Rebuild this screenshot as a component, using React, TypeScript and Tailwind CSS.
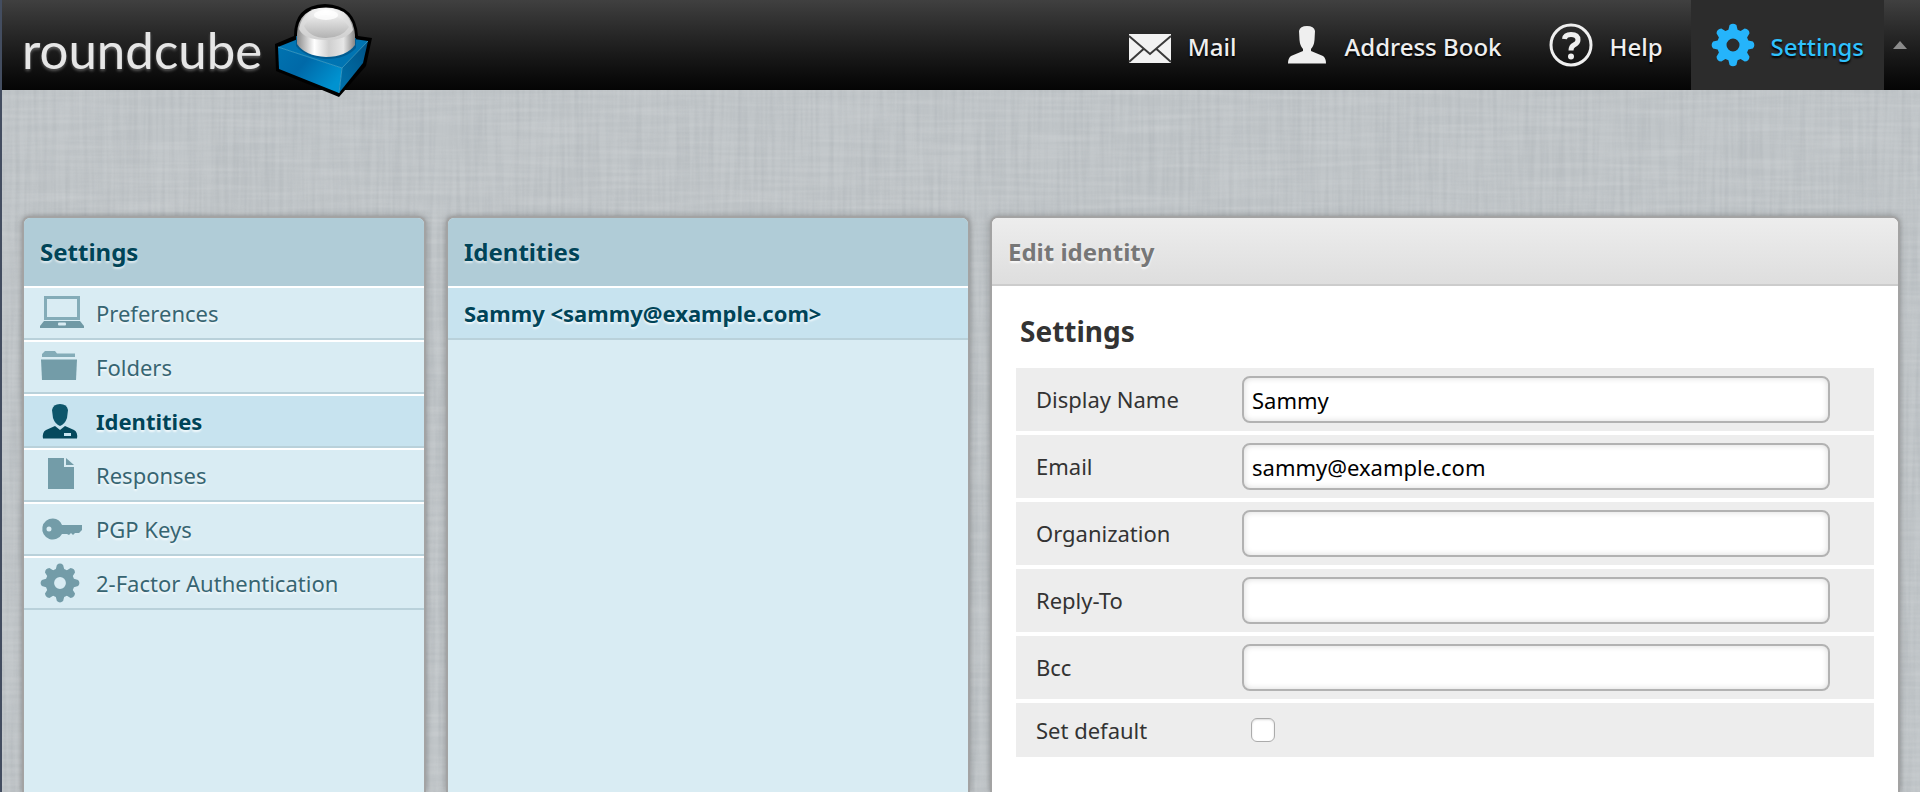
import React, { useState } from "react";

const FONT = "font-['Noto_Sans','Open_Sans',sans-serif]";

function gearPath(cx: number, cy: number, tip: number, base: number, hole: number): string {
  const parts: string[] = [];
  for (let i = 0; i < 8; i++) {
    const mid = (i * Math.PI) / 4 - Math.PI / 2;
    const pt = (r: number, a: number) =>
      `${(cx + r * Math.cos(mid + a)).toFixed(2)} ${(cy + r * Math.sin(mid + a)).toFixed(2)}`;
    const h = tip * 0.94;
    parts.push(
      `${i === 0 ? "M" : "L"}${pt(base, -0.29)}L${pt(h, -0.17)}Q${pt(tip * 1.06, 0)} ${pt(h, 0.17)}L${pt(base, 0.29)}`,
    );
  }
  return `${parts.join("")}Z M${cx - hole} ${cy}a${hole} ${hole} 0 1 0 ${hole * 2} 0a${hole} ${hole} 0 1 0 ${-hole * 2} 0Z`;
}

function Linen() {
  return (
    <svg className="absolute inset-0 h-full w-full" aria-hidden="true">
      <filter id="warp" x="0" y="0" width="100%" height="100%" colorInterpolationFilters="sRGB">
        <feTurbulence type="fractalNoise" baseFrequency="0.22 0.01" numOctaves="2" seed="4" />
        <feColorMatrix values="0 0 0 0 0.42  0 0 0 0 0.45  0 0 0 0 0.48  2 0 0 0 -0.7" />
      </filter>
      <filter id="weft" x="0" y="0" width="100%" height="100%" colorInterpolationFilters="sRGB">
        <feTurbulence type="fractalNoise" baseFrequency="0.01 0.22" numOctaves="2" seed="9" />
        <feColorMatrix values="0 0 0 0 1  0 0 0 0 1  0 0 0 0 1  2 0 0 0 -0.7" />
      </filter>
      <rect width="100%" height="100%" filter="url(#warp)" opacity="0.1" />
      <rect width="100%" height="100%" filter="url(#weft)" opacity="0.11" />
    </svg>
  );
}

function CubeLogo() {
  return (
    <svg className="mt-0.5 h-24 w-[100px]" viewBox="0 0 100 96" aria-hidden="true">
      <defs>
        <linearGradient id="left" x1="0" y1="0" x2="1" y2="0.6">
          <stop offset="0" stopColor="#0073b0" />
          <stop offset="0.45" stopColor="#0069a8" />
          <stop offset="1" stopColor="#0092d0" />
        </linearGradient>
        <linearGradient id="right" x1="0" y1="1" x2="1" y2="0">
          <stop offset="0" stopColor="#0073ad" />
          <stop offset="1" stopColor="#005286" />
        </linearGradient>
        <linearGradient id="ball" x1="0" y1="0" x2="1" y2="0">
          <stop offset="0" stopColor="#8c8c8c" />
          <stop offset="0.3" stopColor="#ffffff" />
          <stop offset="0.55" stopColor="#cfcfcf" />
          <stop offset="0.8" stopColor="#e6e6e6" />
          <stop offset="1" stopColor="#858585" />
        </linearGradient>
        <radialGradient id="dome" cx="0.5" cy="0.12" r="0.9">
          <stop offset="0" stopColor="#ffffff" />
          <stop offset="0.5" stopColor="#dedede" />
          <stop offset="1" stopColor="#d0d0d0" />
        </radialGradient>
        <linearGradient id="bowl" x1="0" y1="0" x2="0" y2="1">
          <stop offset="0" stopColor="#ececec" />
          <stop offset="1" stopColor="#b2b2b2" />
        </linearGradient>
      </defs>
      <path d="M1 42L20 34Q20 3 51 2Q82 3 84 34L98 36L92 64L65 95L2 69Z" fill="#000" />
      <path d="M4 45L24 37H80L94 39L68 66Z" fill="#0074b2" />
      <path d="M4 45L68 66L65 91L5 67Z" fill="url(#left)" />
      <path d="M68 66L94 39L89 61L65 91Z" fill="url(#right)" />
      <path d="M4 45L68 66L94 39M68 66L65 91" fill="none" stroke="#3fa4cf" strokeWidth="1" opacity="0.8" />
      <path d="M22 34V44Q32 56 52 57Q72 57 82 46V36Z" fill="#005c92" />
      <path d="M23 32Q24 6 52 5.500Q79 6 81 33V43Q72 55 52 55Q31 54 23 42Z" fill="url(#ball)" />
      <path d="M25 27Q29 6 52 6Q75 6 79 28Q73 38 52 38Q30 38 25 27Z" fill="url(#dome)" />
      <path d="M30 24Q35 14 52 13Q69 14 75 25Q68 36 52 36Q36 36 30 24Z" fill="url(#bowl)" />
      <ellipse cx="52" cy="13" rx="12" ry="5" fill="#fff" opacity="0.8" />
    </svg>
  );
}

function MailIcon() {
  return (
    <svg className="h-11 w-11" viewBox="0 0 44 44" aria-hidden="true">
      <rect x="1" y="11" width="42" height="29" fill="#f2f2f2" />
      <path d="M1 13L22 31L43 13M1 39L15.500 26M43 39L28.500 26" fill="none" stroke="#3a3a3a" strokeWidth="2" />
    </svg>
  );
}

function PersonIcon() {
  return (
    <svg className="h-11 w-11" viewBox="0 0 44 44" aria-hidden="true">
      <path
        d="M14 8Q15 3 22 3Q29 3 30 8L29.500 17Q29 23 26 26V28L38 33Q41 35 41 40.500H3Q3 35 6 33L18 28V26Q15 23 14.500 17Z"
        fill="#efefef"
      />
    </svg>
  );
}

function HelpIcon() {
  return (
    <svg className="h-11 w-11" viewBox="0 0 44 44" aria-hidden="true">
      <circle cx="22" cy="22" r="20" fill="none" stroke="#efefef" strokeWidth="3" />
      <path d="M15.500 16Q16 11.500 22 11.500Q29 11.500 29 17Q29 20 25 22Q22 23.500 22 27.500" fill="none" stroke="#efefef" strokeWidth="5" />
      <circle cx="22" cy="33.500" r="3" fill="#efefef" />
    </svg>
  );
}

function GearIcon({ className, fill }: { className: string; fill: string }) {
  return (
    <svg className={className} viewBox="0 0 44 44" aria-hidden="true">
      <path d={gearPath(22, 22, 21.5, 16, 6.5)} fill={fill} fillRule="evenodd" />
    </svg>
  );
}

const SIDE = "h-11 w-11";

const sideItems: { label: string; icon: React.ReactNode }[] = [
  {
    label: "Preferences",
    icon: (
      <svg className={SIDE} viewBox="0 0 44 44" aria-hidden="true">
        <rect x="5.500" y="6.500" width="33" height="21" fill="none" stroke="#84acb8" strokeWidth="3" />
        <path d="M4 30H40L44 35V37H0V35Z" fill="#7099a5" />
        <rect x="18" y="31.500" width="8" height="3" rx="1" fill="#d9ecf3" />
      </svg>
    ),
  },
  {
    label: "Folders",
    icon: (
      <svg className={SIDE} viewBox="0 0 44 44" aria-hidden="true">
        <path d="M2 12V9L5 6H15L17 8.500H35V12Z" fill="#84acb8" />
        <path d="M1 14.500H37L36 35H2Z" fill="#739ca8" />
      </svg>
    ),
  },
  {
    label: "Identities",
    icon: (
      <svg className={SIDE} viewBox="0 0 44 44" aria-hidden="true">
        <path d="M12 11Q13 5 20 5Q27 5 28 11L27 19Q25 25 20 27Q15 25 13 19Z" fill="#0d566b" />
        <path d="M15 27L20 31L25 27L34 31Q38 33 37 39.500H3Q2 33 6 31Z" fill="#05495d" />
        <rect x="24" y="34" width="7" height="3" fill="#c7e3ef" />
      </svg>
    ),
  },
  {
    label: "Responses",
    icon: (
      <svg className={SIDE} viewBox="0 0 44 44" aria-hidden="true">
        <path d="M8 5H24V14H34V36H8Z" fill="#739ca8" />
        <path d="M26 5L34 12H26Z" fill="#739ca8" />
      </svg>
    ),
  },
  {
    label: "PGP Keys",
    icon: (
      <svg className={SIDE} viewBox="0 0 44 44" aria-hidden="true">
        <path
          d="M13 11.500A10.500 10.500 0 1 0 22 27H27L29 28L31 26L33 28L35 26H39L42 23V18H22A10.500 10.500 0 0 0 13 11.500ZM9 19.500A2.500 2.500 0 1 1 9 24.500A2.500 2.500 0 1 1 9 19.500Z"
          fill="#739ca8"
          fillRule="evenodd"
        />
      </svg>
    ),
  },
  {
    label: "2-Factor Authentication",
    icon: <GearIcon className="mr-1 h-10 w-10" fill="#739ca8" />,
  },
];

const navItems = [
  { label: "Mail", icon: <MailIcon /> },
  { label: "Address Book", icon: <PersonIcon /> },
  { label: "Help", icon: <HelpIcon /> },
  { label: "Settings", icon: <GearIcon className="h-11 w-11" fill="#25b4fb" /> },
];

const PANEL =
  "flex flex-col overflow-hidden rounded-t-lg border-2 border-b-0 border-[#a3a3a3] shadow-[0_0_6px_rgba(80,80,80,0.5)]";
const BLUE_HEAD =
  "h-17 bg-[#b0ccd7] px-4 text-[24px] leading-[68px] font-bold text-[#004458] [text-shadow:0_2px_2px_rgba(255,255,255,0.6)]";

const textFields = [
  { id: "name", label: "Display Name", value: "Sammy" },
  { id: "email", label: "Email", value: "sammy@example.com" },
  { id: "organization", label: "Organization", value: "" },
  { id: "reply-to", label: "Reply-To", value: "" },
  { id: "bcc", label: "Bcc", value: "" },
];

export default function App() {
  const [active, setActive] = useState("Identities");
  return (
    <div className={`relative flex h-screen flex-col overflow-hidden border-l-2 border-[#434d60] bg-[#c0c5c8] ${FONT}`}>
      <Linen />
      <header className="relative flex h-[90px] shrink-0 items-start justify-between bg-linear-to-b from-[#404040] to-[#050505]">
        <a href="#home" className="flex items-start gap-3 pl-5" aria-label="roundcube">
          <span className="font-['Lato',sans-serif] text-[51px] leading-[100px] text-[#e6e6e6] [text-shadow:0_2px_3px_rgba(255,255,255,0.3)]">
            roundcube
          </span>
          <CubeLogo />
        </a>
        <nav className="flex h-full items-center gap-2">
          {navItems.map(({ label, icon }) => (
            <a
              key={label}
              href={`#${label}`}
              className={`flex h-full items-center gap-4 px-5 text-[24px] font-medium [text-shadow:0_2px_2px_#000] ${
                label === "Settings" ? "bg-[#2c2c2c] text-[#2fc1fd]" : "text-[#efefef]"
              }`}
            >
              {icon}
              <span className="pt-1">{label}</span>
            </a>
          ))}
          <button type="button" aria-label="Collapse" className="flex h-full w-7 items-center">
            <svg className="h-2 w-4" viewBox="0 0 16 8" aria-hidden="true">
              <path d="M1 8L8 0L15 8Z" fill="#8b8b8b" />
            </svg>
          </button>
        </nav>
      </header>

      <main className="relative flex min-h-0 flex-1 gap-5 px-5 pt-[126px]">
        <section className={`w-[404px] shrink-0 bg-[#d9ecf3] ${PANEL}`}>
          <h2 className={BLUE_HEAD}>Settings</h2>
          <ul>
            {sideItems.map(({ label, icon }) => (
              <li key={label} className="border-t-2 border-b-2 border-t-white border-b-[#b9d1da]">
                <button
                  type="button"
                  onClick={() => setActive(label)}
                  className={`flex h-[50px] w-full items-center gap-3 px-4 text-left text-[22px] [text-shadow:0_2px_2px_rgba(255,255,255,0.8)] ${
                    label === active ? "bg-[#c7e3ef] font-bold text-[#004458]" : "text-[#376572]"
                  }`}
                >
                  {icon}
                  {label}
                </button>
              </li>
            ))}
          </ul>
        </section>

        <section className={`w-[524px] shrink-0 bg-[#d9ecf3] ${PANEL}`}>
          <h2 className={BLUE_HEAD}>Identities</h2>
          <button
            type="button"
            className="h-[54px] border-t-2 border-b-2 border-t-white border-b-[#b9d1da] bg-[#c7e3ef] px-4 text-left text-[22px] font-bold text-[#004458] [text-shadow:0_2px_2px_rgba(255,255,255,0.8)]"
          >
            Sammy &lt;sammy@example.com&gt;
          </button>
        </section>

        <section className={`min-w-0 flex-1 bg-white ${PANEL}`}>
          <h2 className="h-17 border-b-2 border-[#cccccc] bg-linear-to-b from-[#ededed] to-[#dedede] px-4 text-[24px] leading-[68px] font-bold text-[#777777] [text-shadow:0_2px_2px_rgba(255,255,255,0.8)]">
            Edit identity
          </h2>
          <form className="px-6 pt-6 text-[22px] text-[#333333]">
            <h3 className="px-1 pb-4 text-[28px] leading-[42px] font-bold">Settings</h3>
            <div className="flex flex-col gap-1">
              {textFields.map(({ id, label, value }) => (
                <div key={id} className="flex h-[63px] items-center bg-[#ededed] pr-11 pl-5">
                  <label htmlFor={id} className="w-[206px] shrink-0">
                    {label}
                  </label>
                  <input
                    id={id}
                    type="text"
                    defaultValue={value}
                    className="h-[47px] min-w-0 flex-1 rounded-lg border-2 border-[#b2b2b2] bg-white px-2 text-black shadow-[inset_0_0_6px_rgba(0,0,0,0.15)]"
                  />
                </div>
              ))}
              <div className="flex h-[54px] items-center bg-[#ededed] pl-5">
                <label htmlFor="default" className="w-[215px] shrink-0">
                  Set default
                </label>
                <input
                  id="default"
                  type="checkbox"
                  className="h-6 w-6 appearance-none rounded-md border border-[#ababab] bg-white shadow-[inset_0_1px_2px_rgba(0,0,0,0.15)] checked:bg-[#25b4fb]"
                />
              </div>
            </div>
          </form>
        </section>
      </main>
    </div>
  );
}
